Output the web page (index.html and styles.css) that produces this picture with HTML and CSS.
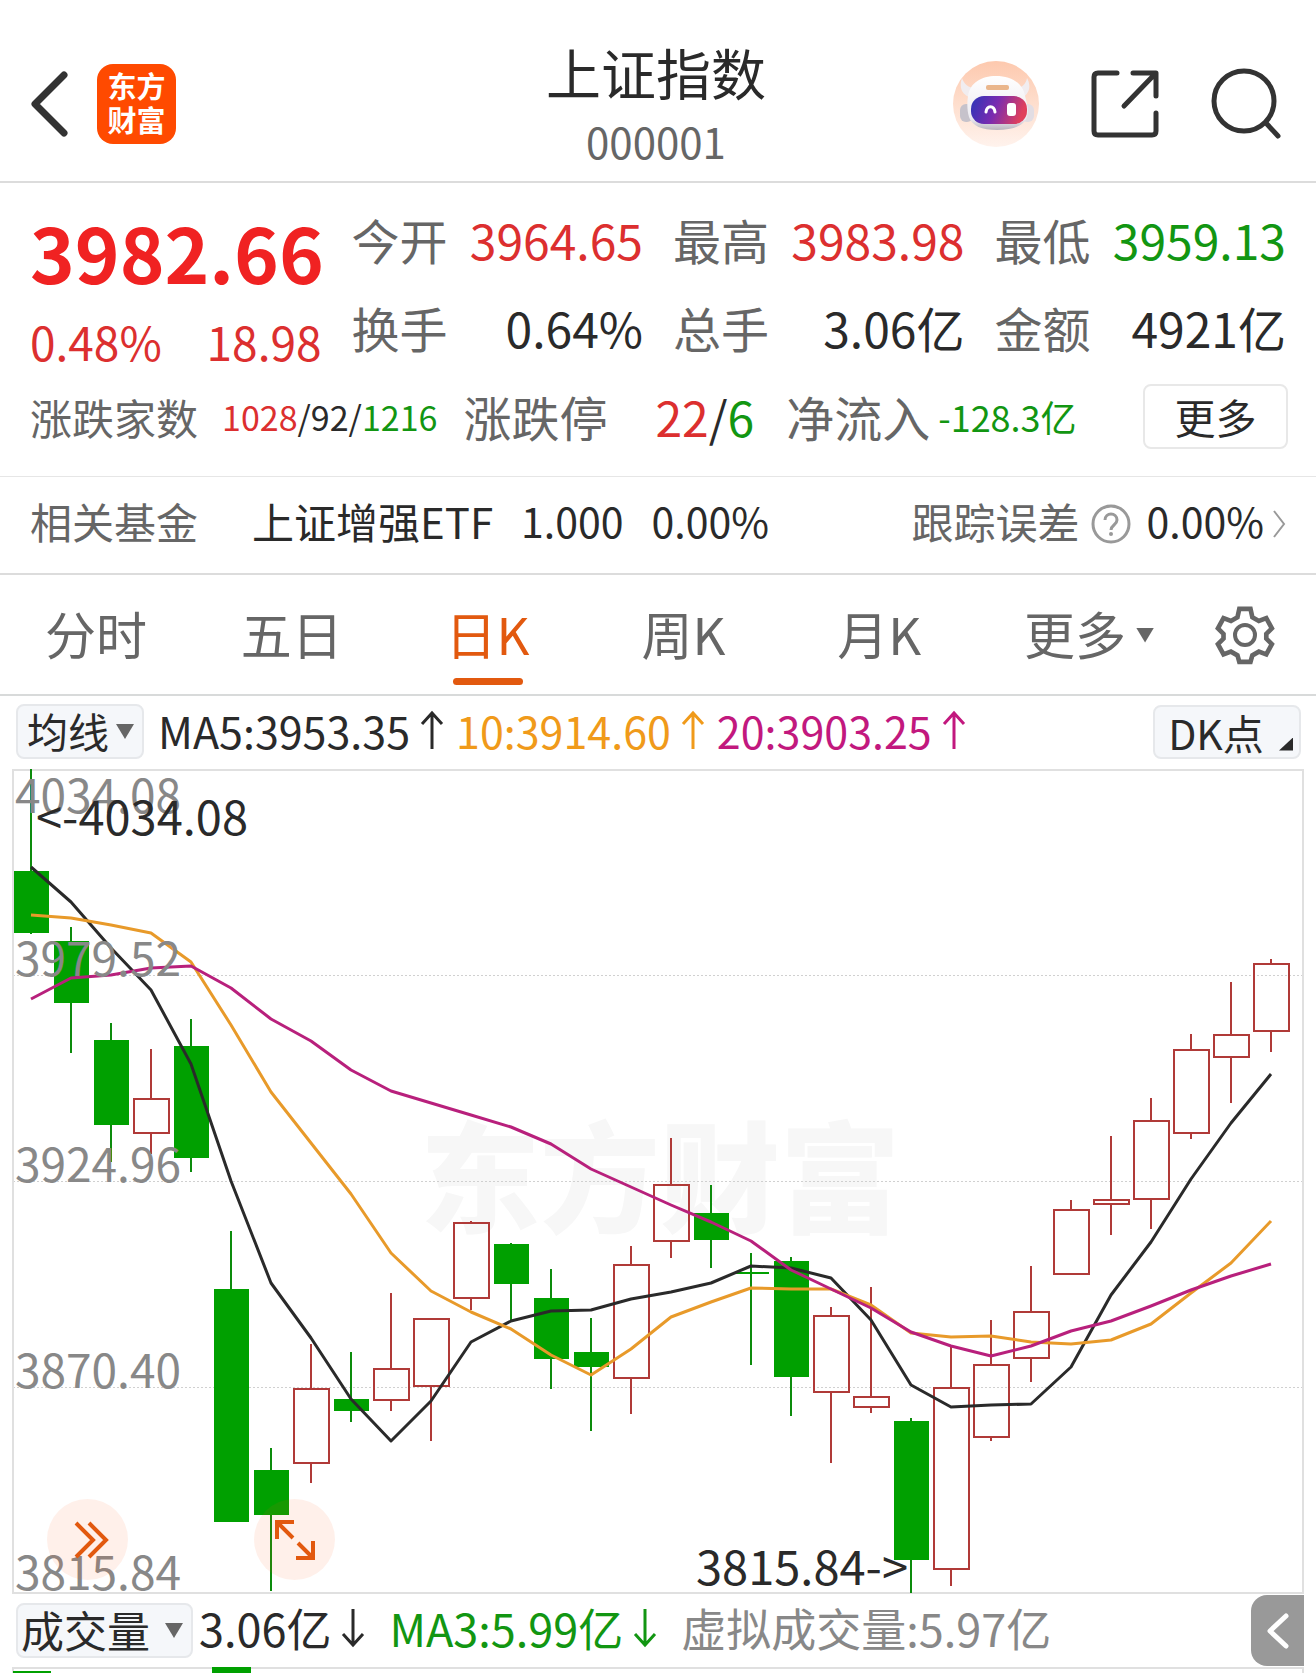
FILE: index.html
```
<!DOCTYPE html>
<html lang="zh-CN">
	<head>
		<meta charset="UTF-8">
		<meta name="viewport" content="width=device-width">
		<title>上证指数 000001</title>
		<link rel="stylesheet" href="styles.css">
	</head>
	<body>
		<header class="header">
			<div class="header-left">
				<button class="icon-btn" aria-label="返回">
					<svg width="38" height="66" viewBox="0 0 38 66"><path d="M34 4L5 33l29 29" fill="none" stroke="#333" stroke-width="7" stroke-linecap="round" stroke-linejoin="round"/></svg>
				</button>
				<a class="logo" href="#">东方<br>财富</a>
			</div>
			<div class="header-title">
				<h1>上证指数</h1>
				<p>000001</p>
			</div>
			<div class="header-right">
				<button class="icon-btn" aria-label="智能助手">
					<svg width="88" height="88" viewBox="0 0 88 88">
						<defs>
							<linearGradient id="bg" x1="0" y1="0" x2="0" y2="1"><stop offset="0" stop-color="#fdc9ae"/><stop offset="1" stop-color="#fff3ed"/></linearGradient>
							<linearGradient id="visor" x1="0" y1="0" x2="1" y2="0.2"><stop offset="0" stop-color="#2b35b8"/><stop offset="0.5" stop-color="#7a2bb0"/><stop offset="1" stop-color="#e0405c"/></linearGradient>
							<linearGradient id="head" x1="0" y1="0" x2="0" y2="1"><stop offset="0" stop-color="#fff"/><stop offset="0.8" stop-color="#eceaf0"/><stop offset="1" stop-color="#b9b5be"/></linearGradient>
						</defs>
						<circle cx="44" cy="44" r="43" fill="url(#bg)"/>
						<path d="M10 18c-3 8-1 16 7 19l7-9c-8 0-12-4-14-10zM75 18c4 7 3 15-4 19l-7-9c6 0 10-4 11-10z" fill="#f1edf0"/>
						<rect x="8" y="44" width="13" height="18" rx="6" fill="#c6c2cb"/>
						<rect x="69" y="44" width="13" height="18" rx="6" fill="#e2dde3"/>
						<path d="M16 36c2-13 13-20 28-20s27 7 29 20c2 7 4 14 2 21-3 9-15 13-30 13S20 66 17 57c-2-7-2-14-1-21z" fill="url(#head)"/>
						<rect x="34" y="25" width="23" height="5" rx="2" fill="#eab68c"/>
						<rect x="19" y="36" width="56" height="28" rx="13" fill="url(#visor)"/>
						<path d="M34 52c1-7 8-7 9 0" fill="none" stroke="#fff" stroke-width="3" stroke-linecap="round"/>
						<rect x="55" y="43" width="9" height="13" rx="3" fill="#fff"/>
					</svg>
				</button>
				<button class="icon-btn" aria-label="分享">
					<svg width="70" height="70" viewBox="0 0 70 70"><path d="M27 4H8q-4 0-4 4v54q0 4 4 4h54q4 0 4-4V44M43 4h23v23M64 6L34 37" fill="none" stroke="#333" stroke-width="5" stroke-linecap="round" stroke-linejoin="round"/></svg>
				</button>
				<button class="icon-btn" aria-label="搜索">
					<svg width="72" height="72" viewBox="0 0 72 72"><circle cx="34" cy="33" r="30" fill="none" stroke="#333" stroke-width="5"/><path d="M56 55l12 13" stroke="#333" stroke-width="5" stroke-linecap="round"/></svg>
				</button>
			</div>
		</header>

		<section class="quote">
			<div class="quote-grid">
				<div class="price">
					<strong>3982.66</strong>
					<div class="change"><span>0.48%</span><span>18.98</span></div>
				</div>
				<div class="cell"><span>今开</span><b class="red">3964.65</b></div>
				<div class="cell"><span>最高</span><b class="red">3983.98</b></div>
				<div class="cell"><span>最低</span><b class="green">3959.13</b></div>
				<div class="cell"><span>换手</span><b>0.64%</b></div>
				<div class="cell"><span>总手</span><b>3.06亿</b></div>
				<div class="cell"><span>金额</span><b>4921亿</b></div>
			</div>
			<div class="breadth">
				<span class="label-s">涨跌家数</span>
				<span class="counts"><i class="red">1028</i>/92/<i class="green">1216</i></span>
				<span class="label">涨跌停</span>
				<span class="limits"><i class="red">22</i>/<i class="green">6</i></span>
				<span class="label">净流入</span>
				<span class="inflow green">-128.3亿</span>
				<button class="more">更多</button>
			</div>
		</section>

		<a class="fund" href="#">
			<span class="gray">相关基金</span>
			<span class="fund-name">上证增强ETF</span>
			<span class="num">1.000</span>
			<span class="num">0.00%</span>
			<span class="gray fund-error">跟踪误差</span>
			<svg class="help" width="40" height="40" viewBox="0 0 40 40"><circle cx="20" cy="20" r="18" fill="none" stroke="#999" stroke-width="3"/><path d="M14 16c0-8 12-8 12 0 0 5-6 5-6 10" fill="none" stroke="#999" stroke-width="3"/><circle cx="20" cy="30" r="2" fill="#999"/></svg>
			<span class="num">0.00%</span>
			<svg class="arrow-right" width="14" height="28" viewBox="0 0 14 28"><path d="M2 1l10 13L2 27" fill="none" stroke="#999" stroke-width="2"/></svg>
		</a>

		<nav class="tabs">
			<button class="tab">分时</button>
			<button class="tab">五日</button>
			<button class="tab active">日K</button>
			<button class="tab">周K</button>
			<button class="tab">月K</button>
			<button class="tab">更多<i class="caret"></i></button>
			<button class="icon-btn setting" aria-label="设置">
				<svg width="60" height="60" viewBox="0 0 60 60"><path d="M24 2h12l2 9 7 4 8-3 6 11-6 6v5l6 6-6 11-8-3-7 4-2 7H24l-2-7-7-4-8 3-6-11 6-6v-5l-6-6 6-11 8 3 7-4z" fill="none" stroke="#666" stroke-width="5" transform="translate(2 2) scale(.93)"/><circle cx="30" cy="30" r="10" fill="none" stroke="#666" stroke-width="4"/></svg>
			</button>
		</nav>

		<div class="indicator">
			<div class="pick">
				<select aria-label="主图指标"><option>均线</option></select>
			</div>
			<span class="ma ma5">MA5:3953.35<svg width="24" height="40" viewBox="0 0 24 40"><path d="M12 39V3M2 14L12 3l10 11"/></svg></span>
			<span class="ma ma10">10:3914.60<svg width="24" height="40" viewBox="0 0 24 40"><path d="M12 39V3M2 14L12 3l10 11"/></svg></span>
			<span class="ma ma20">20:3903.25<svg width="24" height="40" viewBox="0 0 24 40"><path d="M12 39V3M2 14L12 3l10 11"/></svg></span>
			<button class="dk">DK点</button>
		</div>

		<div class="chart">
			<svg id="kline" viewBox="12 769 1292 825" role="img" aria-label="日K线">
				<text class="watermark" x="660" y="1224" text-anchor="middle">东方财富</text>
				<path class="grid" d="M13 975.5H1303M13 1181.5H1303M13 1387.5H1303"/>
				<rect class="frame" x="13" y="770" width="1290" height="823"/>
				<g id="candles"></g>
				<g id="lines"></g>
				<g class="axis">
					<text x="15" y="813">4034.08</text>
					<text x="15" y="976">3979.52</text>
					<text x="15" y="1182">3924.96</text>
					<text x="15" y="1388">3870.40</text>
					<text x="15" y="1590">3815.84</text>
				</g>
				<text class="mark" x="36" y="835">&lt;-4034.08</text>
				<text class="mark" x="908" y="1585" text-anchor="end">3815.84-&gt;</text>
			</svg>
			<button class="round forward" aria-label="快进">
				<svg width="36" height="40" viewBox="0 0 36 40"><path d="M3 3l17 17L3 37M16 3l17 17-17 17" fill="none" stroke="#e2590f" stroke-width="4"/></svg>
			</button>
			<button class="round expand" aria-label="全屏">
				<svg width="40" height="40" viewBox="0 0 40 40"><path d="M2 19V2h17M3 3l15 15M38 21v17H21M37 37L23 23" fill="none" stroke="#e2590f" stroke-width="4"/></svg>
			</button>
		</div>

		<div class="volume">
			<div class="pick pick-vol">
				<select aria-label="副图指标"><option>成交量</option></select>
			</div>
			<span class="ma ma5">3.06亿<svg width="24" height="40" viewBox="0 0 24 40"><path d="M12 1v36M2 26l10 11 10-11"/></svg></span>
			<span class="ma ma3">MA3:5.99亿<svg width="24" height="40" viewBox="0 0 24 40"><path d="M12 1v36M2 26l10 11 10-11"/></svg></span>
			<span class="ma virtual">虚拟成交量:5.97亿</span>
			<button class="drawer" aria-label="展开">
				<svg width="24" height="36" viewBox="0 0 24 36"><path d="M20 3L4 18l16 15" fill="none" stroke="#fff" stroke-width="5" stroke-linecap="round" stroke-linejoin="round"/></svg>
			</button>
		</div>
		<div class="vol-chart">
			<svg viewBox="12 1667 1292 6">
				<path class="frame" d="M13 1673V1668H1303V1673"/>
				<path d="M13 1671h38v2H13zM212 1667h39v6H212z" fill="#00a000"/>
			</svg>
		</div>
		<script src="script.js"></script>
	</body>
</html>
```
FILE: styles.css
```
*{
	margin: 0;
	padding: 0;
	box-sizing: border-box;
}
body{
	background: #fff;
	color: #2a2a2a;
	font-family: "Noto Sans CJK SC", sans-serif;
	overflow-x: hidden;
}
button, select{
	font-family: inherit;
	color: inherit;
	background: none;
	border: none;
}
a{
	color: inherit;
	text-decoration: none;
}
i{
	font-style: normal;
}
svg{
	display: block;
}
.red{
	color: #dc2f2f;
}
.green{
	color: #129612;
}

/* 顶部 */
.header{
	display: grid;
	grid-template-columns: 1fr auto 1fr;
	height: 183px;
	padding: 0 34px 0 30px;
	border-bottom: 2px solid #dcdcdc;
}
.header-left, .header-right{
	display: flex;
	align-items: center;
	padding-top: 26px;
}
.header-left{
	gap: 29px;
}
.header-right{
	justify-content: flex-end;
	gap: 50px;
}
.logo{
	width: 79px;
	height: 80px;
	padding-top: 4px;
	border-radius: 16px;
	background: #ff4a00;
	color: #fff;
	font-size: 29px;
	line-height: 34px;
	font-weight: bold;
	text-align: center;
}
.header-title{
	padding-top: 38px;
	text-align: center;
}
.header-title h1{
	font-size: 55px;
	line-height: 66px;
	font-weight: normal;
}
.header-title p{
	font-size: 42px;
	line-height: 74px;
	color: #666;
}

/* 行情 */
.quote{
	padding: 12px 28px 17px 30px;
	border-bottom: 1px solid #e6e6e6;
}
.quote-grid{
	display: grid;
	grid-template-columns: repeat(4, 1fr);
	grid-auto-rows: 88px;
	column-gap: 30px;
	padding-right: 2px;
}
.price{
	grid-row: span 2;
	min-width: 0;
	color: #f02222;
}
.price strong{
	display: block;
	font-size: 76px;
	line-height: 112px;
}
.change{
	display: flex;
	justify-content: space-between;
	font-size: 46px;
	line-height: 68px;
	color: #dc2f2f;
}
.cell{
	display: flex;
	justify-content: space-between;
	font-size: 48px;
	line-height: 88px;
	white-space: nowrap;
}
.cell span{
	color: #666;
}
.cell b{
	font-weight: normal;
}
.breadth{
	display: flex;
	align-items: center;
	height: 88px;
	padding-top: 2px;
	white-space: nowrap;
}
.label-s{
	font-size: 42px;
	color: #666;
}
.label{
	font-size: 48px;
	color: #666;
}
.counts{
	margin: 0 26px 0 24px;
	font-size: 34px;
}
.limits{
	margin: 0 32px 0 48px;
	font-size: 48px;
}
.inflow{
	margin-left: 8px;
	font-size: 36px;
}
.more{
	width: 145px;
	height: 65px;
	margin-left: auto;
	border: 2px solid #e8e8e8;
	border-radius: 8px;
	font-size: 41px;
	line-height: 54px;
}

/* 相关基金 */
.fund{
	display: flex;
	align-items: center;
	height: 98px;
	padding: 0 30px 10px;
	border-bottom: 2px solid #dcdcdc;
	font-size: 42px;
	white-space: nowrap;
}
.gray{
	color: #666;
}
.fund-name{
	margin-left: 54px;
}
.fund .num{
	margin-left: 28px;
	font-size: 41px;
}
.fund-error{
	margin-left: auto;
}
.help{
	margin: 7px 0 0 11px;
}
.fund .help + .num{
	margin-left: 16px;
}
.arrow-right{
	margin: 7px 0 0 8px;
}

/* 周期 */
.tabs{
	display: flex;
	height: 121px;
	padding-right: 41px;
	border-bottom: 2px solid #d8dada;
}
.tab{
	position: relative;
	flex: 1 1 0;
	min-width: 0;
	padding: 0 4px 4px 0;
	font-size: 51px;
	line-height: 112px;
	color: #666;
	white-space: nowrap;
}
.tab.active{
	color: #e2590f;
}
.tab.active::after{
	content: "";
	position: absolute;
	left: 50%;
	bottom: 9px;
	width: 70px;
	height: 7px;
	margin-left: -37px;
	border-radius: 4px;
	background: #e2590f;
}
.caret{
	display: inline-block;
	width: 18px;
	height: 15px;
	margin: 0 -28px 0 10px;
	vertical-align: 12px;
	background: #666;
	clip-path: polygon(0 0, 100% 0, 50% 100%);
}
.setting{
	margin-left: 40px;
}

/* 均线 */
.indicator, .volume{
	display: flex;
	align-items: center;
	height: 73px;
	white-space: nowrap;
}
.indicator{
	padding: 0 15px 2px 16px;
	font-size: 43px;
}
.pick{
	position: relative;
	display: flex;
	align-items: center;
	width: 128px;
	height: 55px;
	margin-right: 14px;
	border: 2px solid #e6e8eb;
	border-radius: 8px;
	background: #f5f7fa;
}
.pick select{
	appearance: none;
	flex: none;
	width: 100%;
	height: 66px;
	padding: 0 0 4px 9px;
	font-size: 41px;
}
.pick::after{
	content: "";
	position: absolute;
	top: 18px;
	right: 8px;
	width: 18px;
	height: 15px;
	background: #666;
	clip-path: polygon(0 0, 100% 0, 50% 100%);
	pointer-events: none;
}
.ma{
	display: flex;
	align-items: center;
	gap: 10px;
	margin-right: 12px;
	padding-bottom: 4px;
	line-height: 60px;
}
.ma svg{
	fill: none;
	stroke: currentColor;
	stroke-width: 3px;
}
.ma10{
	color: #f09a1a;
}
.ma20{
	color: #c2187e;
}
.ma3{
	color: #129612;
}
.dk{
	position: relative;
	width: 148px;
	height: 54px;
	margin-left: auto;
	padding: 0 22px 0 0;
	border: 2px solid #e6e8eb;
	border-radius: 8px;
	background: #f5f7fa;
	font-size: 41px;
	line-height: 42px;
}
.dk::after{
	content: "";
	position: absolute;
	right: 6px;
	bottom: 6px;
	width: 14px;
	height: 13px;
	background: #2a2a2a;
	clip-path: polygon(100% 0, 100% 100%, 0 100%);
}

/* K线 */
.chart{
	position: relative;
	margin: 0 12px;
}
.chart > svg, .vol-chart svg{
	width: 100%;
	height: auto;
}
.watermark{
	font-size: 120px;
	font-weight: 900;
	fill: #f7f7f7;
}
.frame{
	fill: none;
	stroke: #e0e0e0;
	stroke-width: 2px;
}
.grid{
	stroke: #d0d0d0;
	stroke-width: 1px;
	stroke-dasharray: 2 2;
}
.up{
	fill: none;
	stroke: #b03a38;
	stroke-width: 2px;
}
.down{
	fill: #00a000;
	stroke: #0c8c0c;
	stroke-width: 2px;
}
.line{
	fill: none;
	stroke-width: 3px;
	stroke-linejoin: round;
}
.axis{
	font-size: 46px;
	fill: #888;
}
.mark{
	font-size: 47px;
	fill: #2a2a2a;
}
.round{
	position: absolute;
	bottom: 14px;
	display: flex;
	align-items: center;
	justify-content: center;
	width: 81px;
	height: 81px;
	border-radius: 50%;
	background: rgba(255,90,20,0.09);
}
.forward{
	left: 35px;
	padding-left: 6px;
}
.expand{
	left: 242px;
}

/* 成交量 */
.volume{
	padding: 0 12px 0 16px;
	font-size: 45px;
}
.pick-vol{
	width: 177px;
	margin-right: 6px;
}
.pick-vol select{
	padding-left: 3px;
	font-size: 43px;
}
.volume .ma{
	margin-right: 24px;
	padding-bottom: 6px;
}
.volume .virtual{
	margin-right: 0;
	color: #888;
}
.drawer{
	display: flex;
	align-items: center;
	justify-content: center;
	width: 53px;
	height: 71px;
	margin-left: auto;
	border-radius: 16px 0 0 16px;
	background: #999;
}
.vol-chart{
	margin: 0 12px;
}
```
FILE: script.js
```
/*
 * 每根K线: [涨跌, 最高, 实体上沿, 实体下沿, 最低]
 * 数值为画布纵坐标，相邻两根间隔40
 */
var klines = [
	[0,769,871,933,934],[0,927,941,1003,1053],[0,1023,1040,1125,1162],[1,1049,1099,1133,1154],
	[0,1019,1046,1158,1172],[0,1231,1289,1522,1522],[0,1448,1470,1515,1591],[1,1344,1389,1463,1483],
	[0,1352,1399,1411,1422],[1,1293,1369,1400,1411],[1,1319,1319,1386,1441],[1,1221,1223,1298,1310],
	[0,1243,1244,1284,1320],[0,1269,1298,1359,1389],[0,1318,1352,1367,1431],[1,1246,1265,1378,1414],
	[1,1138,1185,1241,1258],[0,1185,1213,1240,1268],[0,1253,1272,1274,1365],[0,1257,1261,1377,1416],
	[1,1307,1316,1392,1463],[1,1287,1397,1407,1413],[0,1418,1421,1560,1593],[1,1347,1388,1569,1586],
	[1,1320,1365,1437,1441],[1,1266,1312,1358,1382],[1,1200,1210,1274,1274],[1,1136,1200,1204,1235],
	[1,1098,1121,1199,1229],[1,1034,1050,1133,1139],[1,982,1035,1057,1103],[1,959,964,1031,1052]
];
var mas = {
	'#2a2a2a': [867,902,948,990,1064,1181,1283,1338,1399,1441,1401,1342,1321,1311,1310,1299,1292,1283,1266,1268,1278,1320,1385,1407,1405,1404,1367,1295,1242,1179,1123,1074],
	'#e89a2a': [915,918,925,933,962,1025,1092,1143,1194,1253,1291,1312,1329,1355,1375,1349,1317,1302,1288,1289,1289,1305,1333,1337,1336,1342,1344,1340,1324,1293,1263,1221],
	'#b8207c': [999,978,975,968,966,988,1019,1041,1070,1091,1103,1115,1127,1144,1169,1187,1205,1222,1241,1270,1289,1308,1332,1346,1356,1346,1331,1321,1306,1290,1276,1264]
};

var html = '';
for(var i=0;i<klines.length;i++){
	var k = klines[i];
	var x = 31 + 40*i;
	html += '<g class="' + (k[0] ? 'up' : 'down') + '">';
	html += '<path d="M' + x + ' ' + k[1] + 'V' + k[2] + 'M' + x + ' ' + k[3] + 'V' + k[4] + '"/>';
	if(k[0]){
		html += '<rect x="' + (x - 17) + '" y="' + k[2] + '" width="35" height="' + (k[3] - k[2]) + '"/>';
	}else{
		// 阴线实心，不描边
		html += '<rect x="' + (x - 17) + '" y="' + k[2] + '" width="35" height="' + (k[3] - k[2]) + '" stroke="none"/>';
	}
	html += '</g>';
}
document.getElementById('candles').innerHTML = html;

html = '';
for(var color in mas){
	var pts = mas[color].map(function(y, n){
		return (31 + 40*n) + ',' + y;
	});
	html += '<polyline class="line" stroke="' + color + '" points="' + pts.join(' ') + '"/>';
}
document.getElementById('lines').innerHTML = html;
```
